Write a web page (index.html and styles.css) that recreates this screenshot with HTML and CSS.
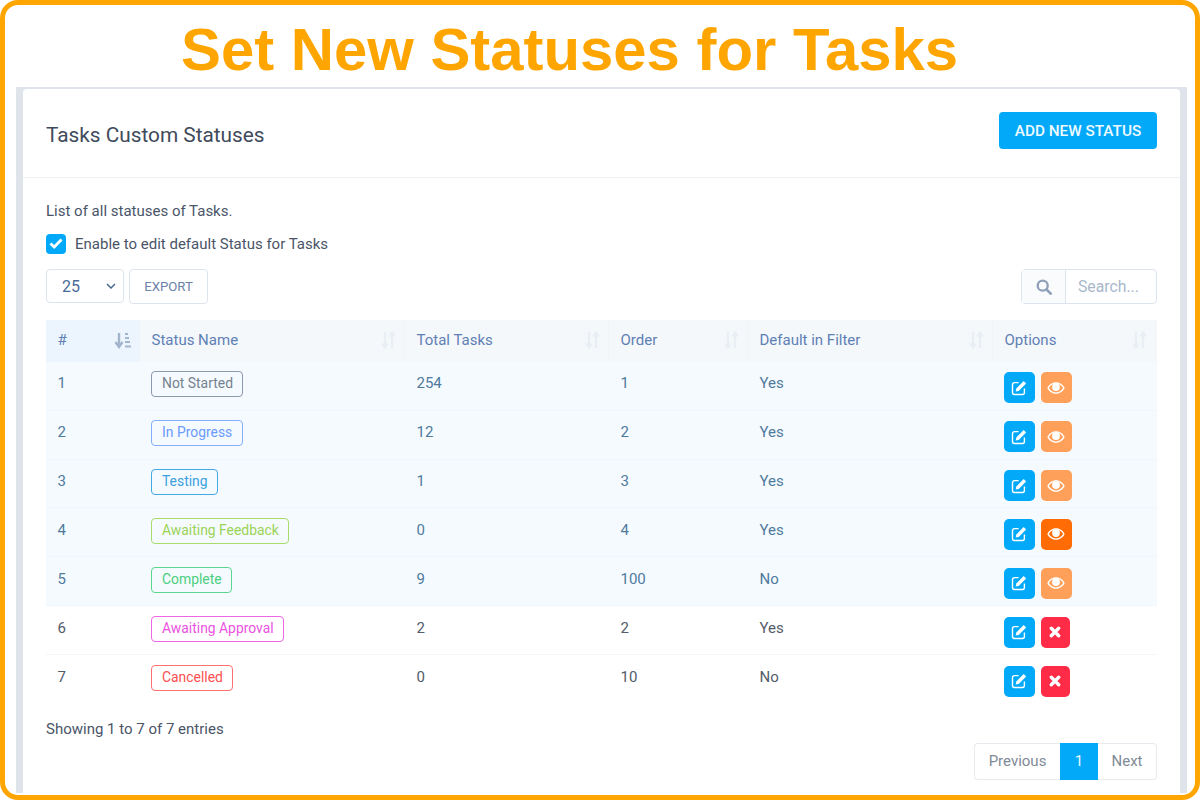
FILE: index.html
```html
<!DOCTYPE html>
<html lang="en">
<head>
<meta charset="utf-8">
<title>Set New Statuses for Tasks</title>
<link rel="stylesheet" href="styles.css">
</head>
<body>
<svg class="defs" width="0" height="0" aria-hidden="true">
  <symbol id="i-edit" viewBox="0 0 16 16">
    <path d="M7.6 2.6H3.4A1.9 1.9 0 0 0 1.5 4.5v8.1a1.9 1.9 0 0 0 1.9 1.9h8.1a1.9 1.9 0 0 0 1.9-1.9V8.6" fill="none" stroke="currentColor" stroke-width="1.4"/>
    <path d="M12.7 1.1l2.4 2.4-7.4 7.4-3 .6.6-3z" fill="currentColor"/>
  </symbol>
  <symbol id="i-eye" viewBox="0 0 18 14">
    <path fill-rule="evenodd" fill="currentColor" d="M9 1.2c4 0 7.2 2.700 8.700 5.800-1.500 3.100-4.700 5.800-8.700 5.800S1.800 10.100.3 7C1.800 3.900 5 1.200 9 1.200zM9 2.600C6 2.600 3.400 4.400 1.900 7 3.400 9.600 6 11.400 9 11.400s5.600-1.800 7.100-4.400C14.600 4.400 12 2.600 9 2.600z"/>
    <circle cx="9" cy="6" r="3.900" fill="currentColor"/>
  </symbol>
  <symbol id="i-x" viewBox="0 0 12 12">
    <path d="M2.300 2.300l7.400 7.400M9.700 2.300l-7.400 7.400" fill="none" stroke="currentColor" stroke-width="3.400" stroke-linecap="round"/>
  </symbol>
  <symbol id="i-sort" viewBox="0 0 17 17">
    <path d="M5 1v13M1.500 10l3.500 5 3.500-5" fill="none" stroke="currentColor" stroke-width="2.400"/>
    <path d="M11 2h3M11 6h4M11 10h5M11 14.500h6" fill="none" stroke="currentColor" stroke-width="2"/>
  </symbol>
  <symbol id="i-updown" viewBox="0 0 15 18" preserveAspectRatio="none">
    <path d="M4 1v15M1.300 12.500L4 16.500l2.700-4M11 17V2M8.300 5.500L11 1.500l2.700 4" fill="none" stroke="currentColor" stroke-width="2.200"/>
  </symbol>
</svg>
<div class="frame">
  <h1 class="headline">Set New Statuses for Tasks</h1>
  <div class="backdrop">
    <main class="card">
      <header class="card-head">
        <h2 class="card-title">Tasks Custom Statuses</h2>
        <button class="btn-add">ADD NEW STATUS</button>
      </header>
      <section class="card-body">
        <p class="intro">List of all statuses of Tasks.</p>
        <label class="check-row">
          <span class="checkbox"><svg viewBox="0 0 14 11" width="14" height="11"><path d="M1.500 5.500l3.700 3.500 7.300-7.500" fill="none" stroke="#fff" stroke-width="2.800"/></svg></span>
          Enable to edit default Status for Tasks
        </label>
        <div class="toolbar">
          <div class="toolbar-left">
            <div class="page-size"><span>25</span><svg viewBox="0 0 10 6" width="10" height="6"><path d="M1 1l4 4 4-4" fill="none" stroke="#4a6a8f" stroke-width="1.500"/></svg></div>
            <button class="btn-export">EXPORT</button>
          </div>
          <div class="search">
            <span class="search-icon"><svg viewBox="0 0 16 16" width="16" height="16"><circle cx="6.700" cy="6.700" r="5" fill="none" stroke="#8fa0b8" stroke-width="2.300"/><path d="M10.500 10.500l4.200 4.200" stroke="#8fa0b8" stroke-width="2.600" stroke-linecap="round"/></svg></span>
            <span class="search-input">Search...</span>
          </div>
        </div>
        <table class="grid">
          <colgroup>
            <col class="c1"><col class="c2"><col class="c3"><col class="c4"><col class="c5"><col class="c6">
          </colgroup>
          <thead>
            <tr>
              <th class="sorted"><div class="th-in">#<svg class="sort-on"><use href="#i-sort"/></svg></div></th>
              <th><div class="th-in">Status Name<svg class="sort-off"><use href="#i-updown"/></svg></div></th>
              <th><div class="th-in">Total Tasks<svg class="sort-off"><use href="#i-updown"/></svg></div></th>
              <th><div class="th-in">Order<svg class="sort-off"><use href="#i-updown"/></svg></div></th>
              <th><div class="th-in">Default in Filter<svg class="sort-off"><use href="#i-updown"/></svg></div></th>
              <th><div class="th-in">Options<svg class="sort-off"><use href="#i-updown"/></svg></div></th>
            </tr>
          </thead>
          <tbody>
            <tr class="tint">
              <td>1</td><td><span class="tag t-slate">Not Started</span></td><td>254</td><td>1</td><td>Yes</td>
              <td><div class="acts"><span class="act a-edit"><svg><use href="#i-edit"/></svg></span><span class="act a-eye"><svg><use href="#i-eye"/></svg></span></div></td>
            </tr>
            <tr class="tint">
              <td>2</td><td><span class="tag t-blue">In Progress</span></td><td>12</td><td>2</td><td>Yes</td>
              <td><div class="acts"><span class="act a-edit"><svg><use href="#i-edit"/></svg></span><span class="act a-eye"><svg><use href="#i-eye"/></svg></span></div></td>
            </tr>
            <tr class="tint">
              <td>3</td><td><span class="tag t-sky">Testing</span></td><td>1</td><td>3</td><td>Yes</td>
              <td><div class="acts"><span class="act a-edit"><svg><use href="#i-edit"/></svg></span><span class="act a-eye"><svg><use href="#i-eye"/></svg></span></div></td>
            </tr>
            <tr class="tint">
              <td>4</td><td><span class="tag t-lime">Awaiting Feedback</span></td><td>0</td><td>4</td><td>Yes</td>
              <td><div class="acts"><span class="act a-edit"><svg><use href="#i-edit"/></svg></span><span class="act a-eye-on"><svg><use href="#i-eye"/></svg></span></div></td>
            </tr>
            <tr class="tint">
              <td>5</td><td><span class="tag t-green">Complete</span></td><td>9</td><td>100</td><td>No</td>
              <td><div class="acts"><span class="act a-edit"><svg><use href="#i-edit"/></svg></span><span class="act a-eye"><svg><use href="#i-eye"/></svg></span></div></td>
            </tr>
            <tr class="plain">
              <td>6</td><td><span class="tag t-pink">Awaiting Approval</span></td><td>2</td><td>2</td><td>Yes</td>
              <td><div class="acts"><span class="act a-edit"><svg><use href="#i-edit"/></svg></span><span class="act a-del"><svg><use href="#i-x"/></svg></span></div></td>
            </tr>
            <tr class="plain">
              <td>7</td><td><span class="tag t-red">Cancelled</span></td><td>0</td><td>10</td><td>No</td>
              <td><div class="acts"><span class="act a-edit"><svg><use href="#i-edit"/></svg></span><span class="act a-del"><svg><use href="#i-x"/></svg></span></div></td>
            </tr>
          </tbody>
        </table>
        <p class="entries">Showing 1 to 7 of 7 entries</p>
        <nav class="pager">
          <span class="pg pg-prev">Previous</span><span class="pg pg-cur">1</span><span class="pg pg-next">Next</span>
        </nav>
      </section>
    </main>
  </div>
</div>
</body>
</html>
```
FILE: styles.css
```css
* { box-sizing: border-box; }
html, body { margin: 0; height: 800px; overflow: hidden; background: #fff; }
body { font-family: Roboto, "Liberation Sans", sans-serif; font-size: 15px; color: #4a5568; }
.defs { position: absolute; }
.frame {
  height: 800px; border: 5px solid #ffa500; border-radius: 18px;
  display: flex; flex-direction: column; overflow: hidden; background: #fff;
}
.headline {
  margin: 0; height: 82px; padding: 9px 0 0 176px;
  font: 700 59.85px/72px "Liberation Sans", Arial, sans-serif; color: #ffa500;
  white-space: nowrap;
}
.backdrop {
  flex: 1; min-height: 0; margin: 0 8px 2px 11px; padding: 2px 7px 0;
  background: #dfe4eb;
}
.card { height: 100%; background: #fff; border-radius: 4px 4px 0 0; overflow: hidden; }
.card-head {
  height: 89px; padding: 23px 23px 0; border-bottom: 1px solid #eef1f5;
  display: flex; align-items: flex-start; justify-content: space-between;
}
.card-title { margin: 0; line-height: 46px; font-size: 20.8px; font-weight: 400; color: #3f4b5b; }
.btn-add {
  width: 158px; height: 37px; padding: 0; border: 0; border-radius: 4px;
  background: #03a9f9; color: #eef9ff; font: 500 15.3px Roboto, sans-serif;
}
.card-body { padding: 24px 23px 0; }
.intro { margin: 0; height: 19px; line-height: 19px; color: #4a5568; }
.check-row { display: flex; align-items: center; gap: 9px; margin-top: 13px; height: 19px; color: #4a5568; }
.checkbox {
  width: 20px; height: 20px; border-radius: 4px; background: #03a9f9;
  display: flex; align-items: center; justify-content: center;
}
.toolbar { display: flex; justify-content: space-between; margin-top: 16px; height: 35px; }
.toolbar-left { display: flex; gap: 5px; }
.page-size {
  width: 78px; height: 34px; border: 1px solid #dde4ee; border-radius: 4px;
  display: flex; align-items: center; justify-content: space-between;
  padding: 0 7px 0 15px; font-size: 16px; color: #4a6a9a;
}
.btn-export {
  width: 79px; height: 35px; padding: 0; border: 1px solid #dde4ee; border-radius: 4px;
  background: #fff; color: #6b82a8; font: 400 13.2px Roboto, sans-serif;
}
.search { display: flex; width: 136px; height: 35px; border: 1px solid #dde4ee; border-radius: 4px; }
.search-icon {
  width: 44px; background: #f9fbfd; border-right: 1px solid #dde4ee;
  display: flex; align-items: center; justify-content: center;
}
.search-input { flex: 1; padding-left: 12px; line-height: 33px; color: #a9b7cb; font-size: 15.75px; }
.grid { width: 1111px; margin-top: 16px; border-collapse: separate; border-spacing: 0; table-layout: fixed; }
.c1 { width: 94px; } .c2 { width: 265px; } .c3 { width: 204px; }
.c4 { width: 139px; } .c5 { width: 245px; } .c6 { width: 164px; }
.grid th {
  height: 42px; padding: 0 8px 2px 11.5px; background: #f5f8fb; border-right: 1px solid #f0f4f9;
  font-weight: 400; text-align: left; color: #5f7fb5; font-size: 15px;
}
.grid th:last-child { border-right: 0; padding-right: 10px; }
.grid th.sorted { background: #ecf5fd; }
.th-in { display: flex; align-items: center; justify-content: space-between; }
.sort-on { width: 17px; height: 17px; color: #a3b5cd; }
.sort-off { width: 15px; height: 18px; color: #e9eef4; }
.grid td { height: 48.83px; padding: 0 11.5px 5px; font-size: 15px; }
.tint td { background: #f5faff; color: #4f7a9c; border-bottom: 1px solid #eff6fc; }
.plain td { color: #525c6a; border-bottom: 1px solid #f2f6fb; }
.plain:last-child td { border-bottom: 0; }
.tag {
  display: inline-block; height: 26px; margin: 2px 0 0 -1px; padding: 0 9.5px 0 10.5px; border: 1px solid; border-radius: 4px;
  line-height: 23px; font-size: 13.9px; background: transparent;
}
.t-slate { color: #76828f; border-color: #8b99ad; }
.t-blue { color: #6b9bfb; border-color: #85aefc; }
.t-sky { color: #3d9fdc; border-color: #44a8e2; }
.t-lime { color: #9ad457; border-color: #a8dc6c; }
.t-green { color: #4ccf80; border-color: #5ad78c; }
.t-pink { color: #e953e0; border-color: #ee66e6; }
.t-red { color: #fb4f4f; border-color: #fd7171; }
.acts { display: flex; gap: 6px; margin-left: -1px; padding-top: 9px; }
.act { height: 31px; border-radius: 5px; display: flex; align-items: center; justify-content: center; color: #fff; }
.a-edit { width: 31px; background: #03a9f9; }
.a-edit svg { width: 16px; height: 16px; }
.a-eye, .a-eye-on { width: 31px; }
.a-eye { background: #ffa05a; }
.a-eye-on { background: #ff6b05; }
.a-eye svg, .a-eye-on svg { width: 18px; height: 14px; }
.a-del { width: 29px; background: #ff2b47; }
.a-del svg { width: 12px; height: 12px; }
.entries { margin: 16px 0 0; height: 19px; line-height: 19px; color: #4a5568; }
.pager {
  display: flex; justify-content: flex-end; margin-top: 4px; height: 37px;
}
.pg { height: 37px; line-height: 35px; text-align: center; border: 1px solid #e7eaee; background: #fff; color: #7f8a96; }
.pg-prev { width: 86px; border-radius: 4px 0 0 4px; border-right: 0; }
.pg-cur { width: 38px; background: #03a9f9; border-color: #03a9f9; color: #e8f7ff; }
.pg-next { width: 59px; border-radius: 0 4px 4px 0; border-left: 0; }
```
